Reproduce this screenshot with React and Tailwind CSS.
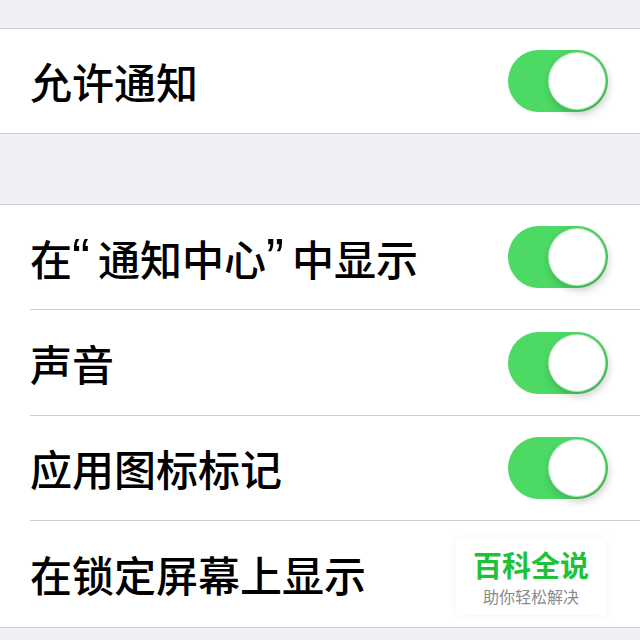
const font = { fontFamily: '"PingFang SC", "Noto Sans CJK SC", "Noto Sans", sans-serif' }
const quote = { fontFamily: '"Liberation Sans", sans-serif' }

function Toggle() {
  return (
    <div className="w-[100px] h-[62px] rounded-full bg-[#4cd964] p-[2px] flex justify-end">
      <div className="w-[58px] h-[58px] rounded-full bg-white border border-[#3fb955]/40 shadow-[2px_4px_8px_rgba(0,0,0,0.22)]" />
    </div>
  )
}

function Row({ label, children, divider, h = "h-[104px]" }) {
  return (
    <div className="bg-white">
      <div className={`${h} flex items-center justify-between pl-[30px] pr-[32px]`}>
        <span className="text-[42px] leading-none text-black font-medium whitespace-nowrap">{label}</span>
        {children}
      </div>
      {divider && <div className="ml-[30px] h-px bg-[#cfcfd3]" />}
    </div>
  )
}

export default function App() {
  return (
    <div className="w-[640px] h-[640px] bg-[#efeff4] overflow-hidden" style={font}>
      <div className="h-[28px]" />
      <div className="border-y border-[#cfcfd3]">
        <Row label="允许通知">
          <Toggle />
        </Row>
      </div>
      <div className="h-[70px]" />
      <div className="border-y border-[#cfcfd3]">
        <Row
          label={
            <>
              在<span className="inline-block w-[26px] text-left text-[54px] leading-[42px] font-normal" style={quote}>“</span>通知中心<span className="inline-block w-[26px] text-left text-[54px] leading-[42px] font-normal" style={quote}>”</span>中显示
            </>
          }
          divider
        >
          <Toggle />
        </Row>
        <Row label="声音" divider h="h-[105px]">
          <Toggle />
        </Row>
        <Row label="应用图标标记" divider>
          <Toggle />
        </Row>
        <Row label="在锁定屏幕上显示" h="h-[106px]">
          <div className="mr-[2px] w-[150px] h-[76px] mt-[6px] bg-white shadow-[0_0_10px_rgba(0,0,0,0.05)] flex flex-col items-center justify-center">
            <span className="text-[29px] leading-none font-bold text-[#1ec23a]">百科全说</span>
            <span className="mt-[9px] text-[16px] leading-none text-[#8a8a8a]">助你轻松解决</span>
          </div>
        </Row>
      </div>
    </div>
  )
}
